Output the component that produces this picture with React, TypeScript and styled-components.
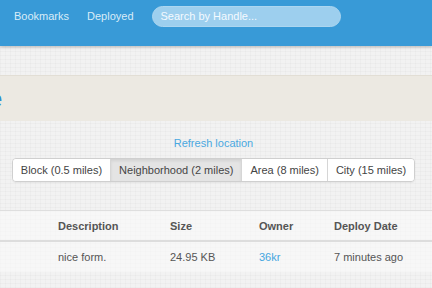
import styled, { createGlobalStyle } from 'styled-components';

const Global = createGlobalStyle`
  html, body { margin: 0; padding: 0; }
  body {
    width: 432px;
    height: 288px;
    overflow: hidden;
    font-family: "Liberation Sans", Arial, sans-serif;
    background-color: #f2f2f2;
    background-image:
      repeating-linear-gradient(0deg, rgba(0,0,0,0.018) 0 1px, transparent 1px 4px),
      repeating-linear-gradient(90deg, rgba(0,0,0,0.018) 0 1px, transparent 1px 5px);
  }
`;

const NavBar = styled.div`
  height: 46px;
  box-sizing: border-box;
  background: #389ad7;
  box-shadow: 0 1px 3px rgba(0,0,0,0.25);
  display: flex;
  align-items: flex-start;
  padding: 6px 0 0 14px;
  position: relative;
  z-index: 2;
`;

const NavLink = styled.a`
  color: #d9ecf8;
  font-size: 11px;
  line-height: 21px;
  text-decoration: none;
  margin-right: 18px;
  white-space: nowrap;
`;

const Search = styled.div`
  width: 189px;
  height: 21px;
  box-sizing: border-box;
  border-radius: 11px;
  background: #9dcfee;
  border: 1px solid #acd6f0;
  color: #f4faff;
  font-size: 11px;
  line-height: 19px;
  padding-left: 8px;
  white-space: nowrap;
`;

const Spacer = styled.div`
  height: 29px;
`;

const HeaderBand = styled.div`
  height: 45px;
  background: #ece9e2;
  border-top: 1px solid #e2ded5;
  overflow: hidden;
  white-space: nowrap;
  display: flex;
  align-items: center;
`;

const Heading = styled.h1`
  margin: 0 0 0 -11px;
  font-size: 24px;
  font-weight: normal;
  color: #2f8ccf;
  line-height: 26px;
  padding-top: 1px;
`;

const Controls = styled.div`
  display: flex;
  flex-direction: column;
  align-items: center;
  padding-top: 15px;
  padding-right: 5px;
`;

const RefreshLink = styled.a`
  color: #4aa8e0;
  font-size: 11px;
  line-height: 14px;
  text-decoration: none;
  margin-bottom: 8px;
  white-space: nowrap;
`;

const Group = styled.div`
  display: flex;
  border: 1px solid #cfcfcf;
  border-radius: 4px;
  overflow: hidden;
  box-shadow: 0 1px 1px rgba(0,0,0,0.05);
`;

const RangeButton = styled.div<{ $active?: boolean }>`
  height: 22px;
  line-height: 22px;
  padding: 0 8px;
  font-size: 11px;
  color: #444;
  white-space: nowrap;
  background: ${p => (p.$active ? '#e4e4e4' : '#fff')};
  box-shadow: ${p => (p.$active ? 'inset 0 2px 3px rgba(0,0,0,0.08)' : 'none')};
  & + & { border-left: 1px solid #d6d6d6; }
`;

const Table = styled.div`
  margin-top: 28px;
  border-top: 1px solid #dedede;
  background: rgba(250,250,250,0.6);
`;

const Row = styled.div<{ $head?: boolean }>`
  display: grid;
  grid-template-columns: 50px 112px 89px 75px 1fr;
  height: ${p => (p.$head ? '29px' : '30px')};
  align-items: center;
  font-size: 11px;
  font-weight: ${p => (p.$head ? 'bold' : 'normal')};
  color: #555;
  border-bottom: ${p => (p.$head ? '2px solid #dddddd' : 'none')};
`;

const Cell = styled.div<{ $link?: boolean }>`
  padding-left: 8px;
  white-space: nowrap;
  color: ${p => (p.$link ? '#45a6e0' : 'inherit')};
`;

export default function App() {
  return (
    <>
      <Global />
      <NavBar>
        <NavLink>Bookmarks</NavLink>
        <NavLink>Deployed</NavLink>
        <Search>Search by Handle...</Search>
      </NavBar>
      <Spacer />
      <HeaderBand>
        <Heading>e</Heading>
      </HeaderBand>
      <Controls>
        <RefreshLink>Refresh location</RefreshLink>
        <Group>
          <RangeButton>Block (0.5 miles)</RangeButton>
          <RangeButton $active>Neighborhood (2 miles)</RangeButton>
          <RangeButton>Area (8 miles)</RangeButton>
          <RangeButton>City (15 miles)</RangeButton>
        </Group>
      </Controls>
      <Table>
        <Row $head>
          <Cell />
          <Cell>Description</Cell>
          <Cell>Size</Cell>
          <Cell>Owner</Cell>
          <Cell>Deploy Date</Cell>
        </Row>
        <Row>
          <Cell />
          <Cell>nice form.</Cell>
          <Cell>24.95 KB</Cell>
          <Cell $link>36kr</Cell>
          <Cell>7 minutes ago</Cell>
        </Row>
      </Table>
    </>
  );
}
